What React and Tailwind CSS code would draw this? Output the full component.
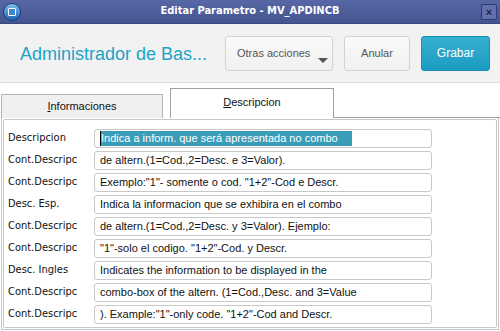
import React from "react";

const rows = [
  ["Descripcion", "Indica a inform. que será apresentada no combo", true],
  ["Cont.Descripc", "de altern.(1=Cod.,2=Desc. e 3=Valor)."],
  ["Cont.Descripc", "Exemplo:\"1\"- somente o cod. \"1+2\"-Cod e Descr."],
  ["Desc. Esp.", "Indica la informacion que se exhibira en el combo"],
  ["Cont.Descripc", "de altern.(1=Cod.,2=Desc. y 3=Valor). Ejemplo:"],
  ["Cont.Descripc", "\"1\"-solo el codigo. \"1+2\"-Cod. y Descr."],
  ["Desc. Ingles", "Indicates the information to be displayed in the"],
  ["Cont.Descripc", "combo-box of the altern. (1=Cod.,Desc. and 3=Value"],
  ["Cont.Descripc", "). Example:\"1\"-only code. \"1+2\"-Cod and Descr."],
];

export default function App() {
  return (
    <div className="w-[500px] h-[331px] overflow-hidden bg-white flex flex-col" style={{ fontFamily: '"Liberation Sans", Arial, sans-serif' }}>
      {/* Title bar */}
      <div className="h-[24px] relative flex items-center justify-center bg-gradient-to-b from-[#5868a6] to-[#44548f] border-b border-[#3a4980]">
        <div className="absolute left-[3px] top-[3px] w-[18px] h-[18px] rounded-full bg-gradient-to-b from-[#7ec0ee] to-[#1f64b8] border border-[#1c3f7a] flex items-center justify-center">
          <div className="w-[8px] h-[8px] border border-white rounded-[1px] bg-[#3b86d0]" />
        </div>
        <span className="text-white text-[11px] font-bold whitespace-nowrap" style={{ fontFamily: '"DejaVu Sans Condensed", "Liberation Sans", sans-serif' }}>Editar Parametro - MV_APDINCB</span>
        <div className="absolute right-[3px] top-[4px] w-[16px] h-[16px] rounded-[2px] border border-[#2f3d6e] bg-[#6271ad] flex items-center justify-center text-[#1d2545] text-[11px] font-bold leading-none">×</div>
      </div>
      {/* Header */}
      <div className="h-[59px] bg-[#f2f2f2] border-b border-[#dcdcdc] flex items-center pl-[20px] pr-[10px]">
        <div className="text-[#1ea3c6] text-[18px] flex-1 leading-none pt-[2px] whitespace-nowrap">Administrador de Bas...</div>
        <div className="relative w-[108px] h-[35px] border border-[#d2d2d2] rounded-[3px] bg-gradient-to-b from-[#fafafa] to-[#f0f0f0] flex items-center pl-[11px] text-[11px] text-[#555]">
          Otras acciones
          <div className="absolute right-[4px] bottom-[7px] w-0 h-0 border-l-[5px] border-r-[5px] border-t-[5px] border-l-transparent border-r-transparent border-t-[#555]" />
        </div>
        <div className="ml-[11px] w-[66px] h-[35px] border border-[#d2d2d2] rounded-[3px] bg-gradient-to-b from-[#fafafa] to-[#f0f0f0] flex items-center justify-center text-[11px] text-[#555]">Anular</div>
        <div className="ml-[11px] w-[69px] h-[35px] border border-[#1b8fb0] rounded-[3px] bg-gradient-to-b from-[#36b0d0] to-[#1a9bc2] flex items-center justify-center text-[12px] text-white">Grabar</div>
      </div>
      {/* Tabs */}
      <div className="h-[35px] flex items-end pl-[1px] pt-[5px]">
        <div className="w-[162px] h-[24px] bg-[#f0f0f0] border border-[#b4b4b4] border-b-0 flex items-center justify-center text-[11px] text-[#111]">
          <span><span className="underline">I</span>nformaciones</span>
        </div>
        <div className="ml-[7px] w-[164px] h-[30px] bg-white border border-[#a0a0a0] border-b-0 flex items-center justify-center text-[11px] text-[#111] pb-[2px]">
          <span><span className="underline">D</span>escripcion</span>
        </div>
        <div className="flex-1 border-b border-[#a0a0a0]" />
      </div>
      {/* Panel */}
      <div className="flex-1 mx-[1px] mb-[1px] border border-[#c8c8c8] border-t-0 p-[1px]">
        <div className="h-full border border-[#c8c8c8] rounded-[2px] pt-[9px] flex flex-col gap-[3px]">
          {rows.map(([label, value, sel], i) => (
            <div key={i} className="flex items-center h-[19px]">
              <div className="w-[90px] pl-[4px] text-[11px] text-[#111] whitespace-nowrap" style={{ fontFamily: 'Tahoma, "DejaVu Sans Condensed", "Liberation Sans", sans-serif' }}>{label}</div>
              <div className="w-[338px] h-[19px] border border-[#c8c8c8] rounded-[3px] bg-white flex items-center pl-[5px] text-[11px] text-[#111] overflow-hidden whitespace-nowrap">
                {sel ? (
                  <span className="bg-[#3a9db8] text-white h-[15px] leading-[15px] pr-[14px] border-l border-black">{value}</span>
                ) : (
                  value
                )}
              </div>
            </div>
          ))}
        </div>
      </div>
    </div>
  );
}
